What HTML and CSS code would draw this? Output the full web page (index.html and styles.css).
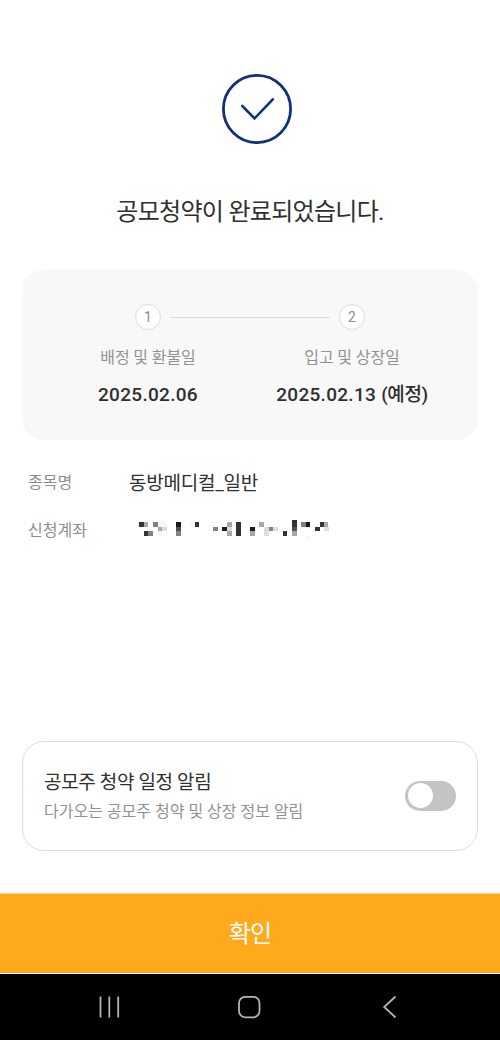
FILE: index.html
```html
<!DOCTYPE html>
<html lang="ko">
<head>
<meta charset="utf-8">
<title>공모청약 완료</title>
<link rel="stylesheet" href="styles.css">
</head>
<body>
<main class="screen">
  <svg class="done" viewBox="0 0 72 72" fill="none" stroke="#123079"><circle cx="36" cy="36" r="33.6" stroke-width="2.8"/><path d="M21.3 33 33.5 45.5 51.8 26.3" stroke-width="2.6" stroke-linecap="round"/></svg>
  <h1 class="title">공모청약이 완료되었습니다.</h1>
  <section class="schedule">
    <div class="steps"><span class="num">1</span><span class="line"></span><span class="num">2</span></div>
    <div class="dates">
      <div class="date"><p class="label">배정 및 환불일</p><p class="value">2025.02.06</p></div>
      <div class="date"><p class="label">입고 및 상장일</p><p class="value">2025.02.13 <span class="expected">(예정)</span></p></div>
    </div>
  </section>
  <dl class="details">
    <dt>종목명</dt><dd>동방메디컬_일반</dd>
    <dt>신청계좌</dt>
    <dd><svg class="mask" viewBox="0 0 41 4.4" preserveAspectRatio="none" shape-rendering="crispEdges">
      <path fill="#1b1b1b" d="M8 0h1v1h-1zM18 1h1v1h-1zM24 1h1v1h-1zM36 0h1v1h-1z"/>
      <path fill="#333" d="M0 0h1v1h-1zM1 2h1v1h-1zM12 0h1v1h-1zM21 0h1v3h-1zM31 2h1v1h-1zM33-.4h1v1.4h-1zM38 1h1v1h-1zM39 0h1v1h-1z"/>
      <path fill="#505050" d="M8 1h1v1h-1zM33 1h1v1h-1z"/>
      <path fill="#818181" d="M3 0h1v1h-1zM2 2h1v1h-1zM8 2h1v1h-1zM16 1h1v1h-1zM28 1h1v1h-1zM35 0h1v1h-1z"/>
      <path fill="#a8a8a8" d="M1 0h1v1h-1zM4 1h1v1h-1zM19 0h1v1h-1zM19 2h1v1h-1zM24 2h1v1h-1zM26 0h1v1h-1zM33 2h1v1h-1zM40 0h.7v1h-.7z"/>
      <path fill="#ddd" d="M5 1h1v1h-1zM19 1h1v1h-1zM27 2h1v1h-1zM27 1h1v1h-1zM29 1h1v1h-1zM40 1h1v1h-1z"/>
      <path fill="#f7f7f7" d="M4 0h2v1h-2zM4 2h1v1h-1zM11 0h1v1h-1zM36 3h1v1h-1z"/>
    </svg></dd>
  </dl>
  <section class="alarm">
    <div><h2 class="alarm-title">공모주 청약 일정 알림</h2><p class="alarm-text">다가오는 공모주 청약 및 상장 정보 알림</p></div>
    <button class="toggle" role="switch" aria-checked="false" aria-label="알림"><span class="knob"></span></button>
  </section>
  <button class="confirm"><span>확인</span></button>
  <nav class="navbar">
    <svg viewBox="0 0 28 28"><path d="M5.5 3.5v21M14.3 3.5v21M23.2 3.5v21"/></svg>
    <svg viewBox="0 0 28 28"><rect x="3" y="3.8" width="20.5" height="20.5" rx="6.2"/></svg>
    <svg viewBox="0 0 28 28"><path d="M18.5 3.5 7.2 14 18.5 24.5"/></svg>
  </nav>
</main>
</body>
</html>
```
FILE: styles.css
```css
* { box-sizing: border-box; margin: 0; padding: 0; }
body { background: #fff; font-family: Roboto, "Noto Sans CJK KR", sans-serif; color: #2f2f2f; }
button { border: 0; font-family: inherit; }
.screen { width: 500px; height: 1040px; display: flex; flex-direction: column; overflow: hidden; }
.done { width: 72px; height: 72px; margin: 73px 0 0 221px; flex: none; }
.title { margin-top: 47px; height: 40px; line-height: 40px; text-align: center; font-size: 24px; font-weight: 400; letter-spacing: -.7px; white-space: nowrap; }
.schedule { margin: 38px 22px 0; height: 170px; background: #f8f8f8; border-radius: 21px; padding-top: 34px; }
.steps { display: flex; align-items: center; justify-content: center; gap: 9px; }
.num { width: 26px; height: 26px; border: 1px solid #ddd; border-radius: 50%; background: #fff; color: #8c8c8c; font-size: 14px; line-height: 25px; text-align: center; }
.line { width: 160px; height: 1px; background: #ddd; }
.dates { display: grid; grid-template-columns: 204px 204px; justify-content: center; margin-top: 16px; text-align: center; white-space: nowrap; }
.label { color: #929292; font-size: 16px; line-height: 24px; letter-spacing: -.1px; }
.value { font-size: 19px; line-height: 28px; margin-top: 11px; font-weight: 500; letter-spacing: .3px; }
.expected { letter-spacing: -.4px; }
.details { display: grid; grid-template-columns: 101px 1fr; grid-auto-rows: 48px; align-items: center; margin: 17px 28px 0; white-space: nowrap; }
.details dt { color: #8d8d8d; font-size: 16px; letter-spacing: 0; }
.details dd { font-size: 19px; letter-spacing: -.25px; }
.mask { display: block; width: 190px; height: 20px; margin: 6px 0 0 10px; overflow: visible; }
.alarm { margin: auto 22px 42px; height: 110px; flex: none; border: 1px solid #ddd; border-radius: 22px; display: flex; align-items: center; justify-content: space-between; padding: 0 21px; white-space: nowrap; }
.alarm-title { margin-top: 2px; font-size: 19px; line-height: 30px; font-weight: 400; letter-spacing: -.35px; }
.alarm-text { font-size: 16px; line-height: 28px; letter-spacing: 0; color: #929292; }
.toggle { width: 51px; height: 30px; border-radius: 15px; background: #c4c4c4; padding: 2px 3px; margin-bottom: 1px; }
.knob { display: block; width: 25px; height: 25px; border-radius: 50%; background: #fff; }
.confirm { height: 80px; flex: none; background: #ffaa1c; color: #fff; font-size: 24px; letter-spacing: -.8px; border-top: 1px solid #ffd58d; padding-bottom: 5px; }
.navbar { height: 66px; flex: none; margin-top: 1px; background: #000; display: flex; justify-content: space-between; padding: 19px 95px 0; }
.navbar svg { width: 28px; height: 28px; fill: none; stroke: #b5b5b5; stroke-width: 1.8; }
```
